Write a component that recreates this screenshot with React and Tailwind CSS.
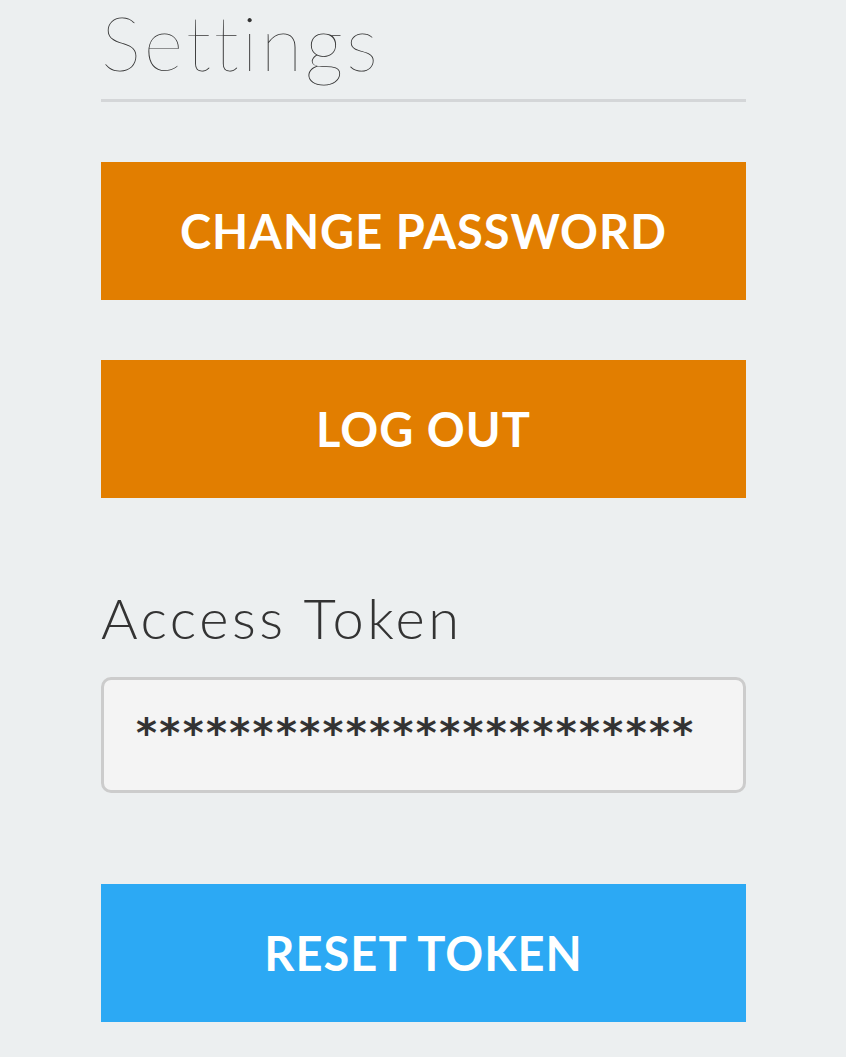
const lato = { fontFamily: "Lato, sans-serif" };

function BigButton({ children, color, className = "" }) {
  return (
    <button
      className={`h-[138px] w-full text-white text-[47px] font-bold tracking-[1px] ${color} ${className}`}
      style={lato}
    >
      {children}
    </button>
  );
}

export default function App() {
  return (
    <div className="min-h-[1057px] bg-[#eceff0]">
      <div className="ml-[101px] w-[645px]">
        <h1 className="text-[76px] leading-[84px] font-thin text-[#333] tracking-[3px]" style={lato}>
          Settings
        </h1>
        <div className="mt-[15px] h-[3px] bg-[#d4d6d8]" />
        <div className="mt-[60px] flex flex-col gap-[60px]">
          <BigButton color="bg-[#e27e00]">CHANGE PASSWORD</BigButton>
          <BigButton color="bg-[#e27e00]">LOG OUT</BigButton>
        </div>
        <div className="mt-[88px] text-[56px] leading-[64px] font-light text-[#333] tracking-[3.5px]" style={lato}>
          Access Token
        </div>
        <div className="mt-[27px] h-[116px] rounded-[10px] border-[3px] border-[#cccccc] bg-[#f4f4f4] flex items-center pl-[32px]">
          <span
            className="text-[40px] font-bold text-[#333] tracking-[2.4px] leading-none -mt-[4px]"
            style={{ fontFamily: "'DejaVu Sans', sans-serif" }}
          >
            ************************
          </span>
        </div>
        <BigButton color="bg-[#2ca9f4]" className="mt-[91px]">RESET TOKEN</BigButton>
      </div>
    </div>
  );
}
